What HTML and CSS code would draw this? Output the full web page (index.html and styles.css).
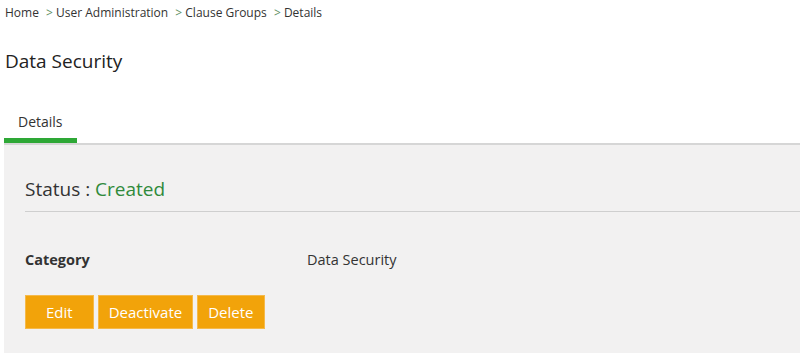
FILE: index.html
```html
<!DOCTYPE html>
<html>
<head>
  <title>Data Security - Details</title>
  <link rel="stylesheet" href="styles.css">
</head>
<body>
  <div class="breadcrumb">
    <a href="#">Home</a>
    <span class="sep">&gt;</span> <a href="#">User Administration</a>
    <span class="sep">&gt;</span> <a href="#">Clause Groups</a>
    <span class="sep">&gt;</span> <span>Details</span>
  </div>

  <h1 class="page-title">Data Security</h1>

  <div class="tabs">
    <div class="tab active">Details</div>
  </div>

  <div class="panel">
    <div class="status">Status : <span class="status-value">Created</span></div>

    <div class="field-row">
      <div class="field-label">Category</div>
      <div class="field-value">Data Security</div>
    </div>

    <div class="actions">
      <button class="btn">Edit</button>
      <button class="btn">Deactivate</button>
      <button class="btn">Delete</button>
    </div>
  </div>
</body>
</html>
```

FILE: styles.css
```css
body {
  margin: 0;
  font-family: "Open Sans", "Noto Sans", sans-serif;
  color: #333;
  background: #fff;
}

.breadcrumb {
  padding: 4px 5px 0;
  height: 22px;
  font-size: 12px;
  line-height: 18px;
  color: #333;
}

.breadcrumb a {
  color: #333;
  text-decoration: none;
}

.breadcrumb .sep {
  color: #5e8f62;
  margin-left: 4px;
}

.page-title {
  margin: 0;
  padding: 22px 5px 0;
  height: 56px;
  font-size: 19px;
  font-weight: normal;
  line-height: 26px;
  color: #222;
}

.tabs {
  display: flex;
  margin-left: 4px;
  border-bottom: 2px solid #d6d6d6;
}

.tab {
  padding: 8px 14px 6px;
  font-size: 14px;
  line-height: 20px;
  color: #333;
  border-bottom: 5px solid #2ea836;
}

.panel {
  margin-left: 4px;
  background: #f2f1f1;
  padding: 30px 0 0 21px;
  height: 210px;
  box-sizing: border-box;
}

.status {
  font-size: 19px;
  line-height: 28px;
  padding-bottom: 8px;
  border-bottom: 1px solid #cfcfcf;
  color: #333;
}

.status-value {
  color: #2f8a3b;
}

.field-row {
  display: flex;
  align-items: center;
  margin-top: 38px;
  font-size: 14.5px;
  line-height: 20px;
}

.field-label {
  width: 282px;
  font-weight: bold;
  color: #333;
}

.field-value {
  color: #333;
}

.actions {
  display: flex;
  gap: 4px;
  margin-top: 25px;
}

.btn {
  background: #f2a30a;
  border: 1px solid #f5b94a;
  color: #fff;
  font-family: inherit;
  font-size: 15px;
  height: 34px;
  padding: 0 10px;
  cursor: pointer;
}

.btn:first-child {
  padding: 0 20px;
}
```
